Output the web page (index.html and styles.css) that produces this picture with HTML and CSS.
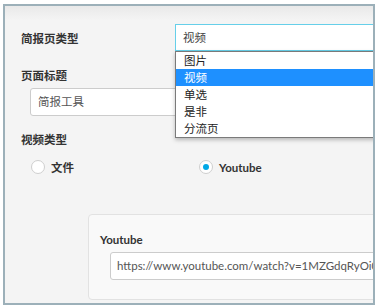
FILE: index.html
```html
<!DOCTYPE html>
<html lang="zh-CN">
<head>
<meta charset="UTF-8" />
<meta name="viewport" content="width=device-width, initial-scale=1" />
<title>简报页设置</title>
<link rel="stylesheet" href="styles.css">
</head>
<body>

<div class="frame">
  <div class="row">
    <label class="row-label">简报页类型</label>
    <div class="select-wrap">
      <div class="select">视频</div>
      <ul class="dropdown">
        <li>图片</li>
        <li class="active">视频</li>
        <li>单选</li>
        <li>是非</li>
        <li>分流页</li>
      </ul>
    </div>
  </div>

  <label class="field-label">页面标题</label>
  <div class="input title-input">简报工具</div>

  <label class="field-label video-label">视频类型</label>
  <div class="radios">
    <div class="radio-item first">
      <span class="radio"></span>
      <span class="radio-text">文件</span>
    </div>
    <div class="radio-item">
      <span class="radio checked"></span>
      <span class="radio-text">Youtube</span>
    </div>
  </div>

  <div class="panel">
    <label class="field-label panel-label">Youtube</label>
    <div class="input url-input">https://www.youtube.com/watch?v=1MZGdqRyOi0</div>
  </div>
</div>

</body>
</html>
```

FILE: styles.css
```css
body {
  margin: 0;
  background: #fff;
  font-family: Lato, "Noto Sans CJK SC", sans-serif;
  font-size: 11.5px;
  color: #333;
}
.frame {
  margin: 4px 0 0 3px;
  width: 352px;
  height: 297px;
  border: 2px solid #9cb0b9;
  background: linear-gradient(#e9e9e9, #f4f4f4 14px);
  padding-left: 16px;
  box-sizing: content-box;
  overflow: hidden;
  position: relative;
}
.row {
  display: flex;
  align-items: center;
  margin-top: 18px;
  height: 27px;
}
.row-label {
  width: 154px;
  flex-shrink: 0;
  font-weight: bold;
}
.select-wrap {
  position: relative;
  flex-shrink: 0;
}
.select {
  width: 230px;
  height: 27px;
  box-sizing: border-box;
  border: 1px solid #66cfe9;
  background: #fff;
  padding-left: 7px;
  line-height: 25px;
  color: #444;
}
.dropdown {
  position: absolute;
  top: 27px;
  left: 0;
  width: 230px;
  margin: 0;
  padding: 0;
  list-style: none;
  background: #fff;
  border: 1px solid #7a7a7a;
  box-shadow: 0 2px 4px rgba(0,0,0,0.25);
  z-index: 2;
}
.dropdown li {
  height: 17px;
  line-height: 17px;
  padding-left: 8px;
  color: #222;
}
.dropdown li.active {
  background: #1e90ff;
  color: #fff;
}
.field-label {
  display: block;
  font-weight: bold;
  line-height: 16px;
  margin-top: 17px;
}
.input {
  height: 28px;
  box-sizing: border-box;
  border: 1px solid #ccc;
  border-radius: 3px;
  background: #fff;
  padding-left: 7px;
  line-height: 26px;
  color: #555;
  white-space: nowrap;
  overflow: hidden;
}
.title-input {
  margin: 4px 0 0 9px;
  width: 330px;
}
.video-label {
  margin-top: 16px;
}
.radios {
  display: flex;
  align-items: center;
  margin: 11px 0 0 10px;
  height: 16px;
}
.radio-item {
  display: flex;
  align-items: center;
  gap: 6px;
}
.radio-item.first {
  width: 168px;
}
.radio {
  width: 14px;
  height: 14px;
  box-sizing: border-box;
  border: 1px solid #cfcfcf;
  border-radius: 50%;
  background: #fff;
  position: relative;
}
.radio.checked::after {
  content: "";
  position: absolute;
  left: 3px;
  top: 3px;
  width: 6px;
  height: 6px;
  border-radius: 50%;
  background: #00a8e6;
}
.radio-text {
  font-weight: bold;
}
.panel {
  margin: 39px 0 0 67px;
  width: 320px;
  height: 86px;
  box-sizing: border-box;
  background: #f9f9f9;
  border: 1px solid #e2e2e2;
  border-radius: 4px;
  padding: 0 0 0 11px;
}
.panel-label {
  margin-top: 17px;
}
.url-input {
  margin: 4px 0 0 10px;
  width: 300px;
  padding-left: 6px;
}
```
